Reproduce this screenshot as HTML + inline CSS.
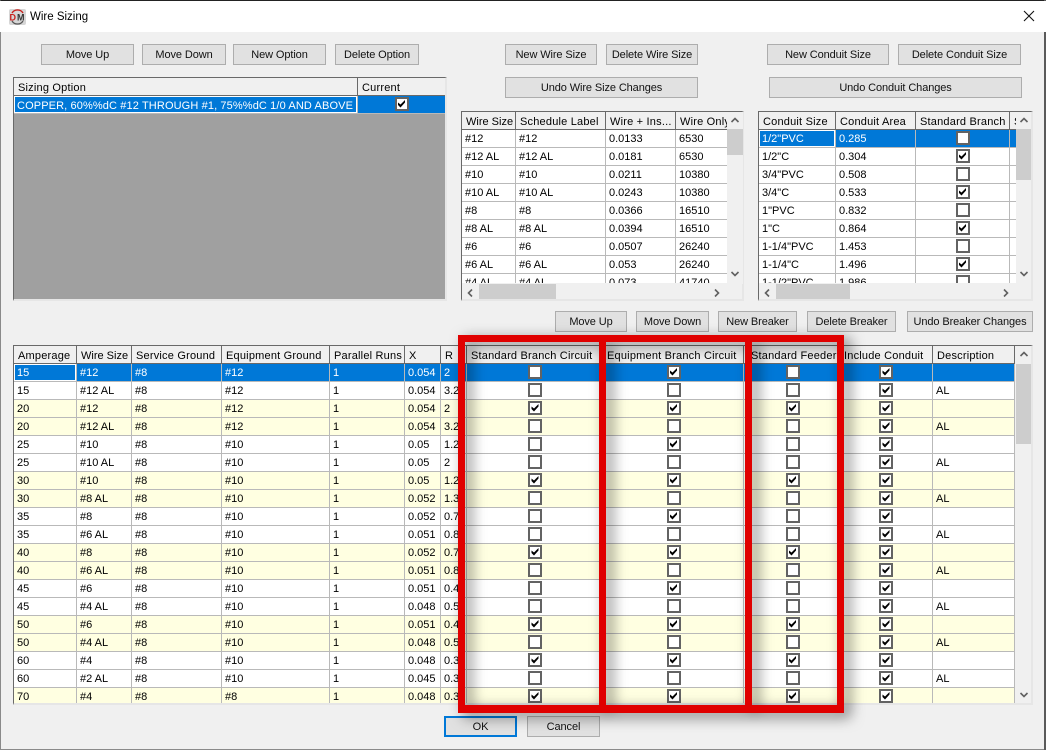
<!DOCTYPE html>
<html><head><meta charset="utf-8"><title>Wire Sizing</title>
<style>
html,body{margin:0;padding:0;width:1046px;height:750px;overflow:hidden;background:#5a5a5a}
*{box-sizing:border-box}
body{font:11px/17px "Liberation Sans",sans-serif;letter-spacing:-.1px;color:#000;position:relative}
#w{position:absolute;left:0;top:0;width:1044px;height:750px;background:#f0f0f0;border-left:1px solid #8a8a8a;border-bottom:1px solid #8a8a8a;border-top:1px solid #222}
#t{position:absolute;left:0;top:1px;width:1046px;height:31px;background:#fff}
.a{position:absolute}
.b{position:absolute;height:21px;background:#e1e1e1;border:1px solid #adadad;text-align:center;line-height:20px;white-space:nowrap;overflow:hidden;color:#111}
.g{position:absolute;background:#f0f0f0;border-top:1px solid #696969;border-left:1px solid #696969;border-right:2px solid #e6e6e6;border-bottom:2px solid #e6e6e6;overflow:hidden}
.c{position:absolute;overflow:hidden;left:0;top:0}
table{border-collapse:separate;border-spacing:0;table-layout:fixed}
th,td{height:18px;padding:2px 0 0 3px;line-height:15px;letter-spacing:0;border-right:1px solid #b9b9b9;border-bottom:1px solid #b9b9b9;overflow:hidden;white-space:nowrap;font-weight:400;text-align:left;vertical-align:top;background:#fff}
th{background:#f0f0f0;border-right:1px solid #696969;border-bottom:1px solid #696969;padding:4px 0 0 4px;line-height:13px;letter-spacing:.2px}
th.w{letter-spacing:0}
tr.y td{background:#ffffe1}
tr.s td{background:#0078d7;color:#fff}
td.f{box-shadow:inset 0 0 0 1px #fff}
td.m{padding:0;line-height:17px}
td.o{padding-top:4px;line-height:13px;letter-spacing:.12px}
i{display:block;width:14px;height:14px;margin:1px auto 0;border:2px solid #636363;background:#fff;position:relative}
i.k:after{content:"";position:absolute;left:0;top:0;width:10px;height:10px;background:#000;clip-path:polygon(1.5px 3.5px,4px 5.5px,8.5px 1px,8.5px 3.5px,4px 8.5px,1.5px 6px)}
td:nth-child(10) i{left:1px}
.vs,.hs{position:absolute;background:#f0f0f0}
.th{position:absolute;background:#cdcdcd}
svg{position:absolute;display:block}
#rb div{position:absolute;background:#e00000}
#rb{position:absolute;left:0;top:0;width:1046px;height:750px;filter:drop-shadow(6px 4px 7px rgba(0,0,0,.55))}
</style></head><body>
<div id="w"></div>
<div id="t"></div>
<svg style="left:9px;top:9px" width="17" height="16" viewBox="0 0 17 16"><rect width="17" height="16" rx="2" fill="#d6d6d6"/><path d="M3 4A6.5 6.5 0 0 1 14 4" fill="none" stroke="#c8201c" stroke-width="1.4"/><path d="M3 12A6.5 6.5 0 0 0 14 12" fill="none" stroke="#555" stroke-width="1.2"/><text x="0.5" y="11.5" font-family="Liberation Sans" font-weight="700" font-size="9" fill="#c8201c" textLength="7">D</text><text x="8" y="11.5" font-family="Liberation Sans" font-weight="700" font-size="9" fill="#333" textLength="8">M</text></svg>
<div class="a" style="left:30px;top:9px;font-size:11.5px;letter-spacing:0">Wire Sizing</div>
<svg style="left:1023px;top:10px" width="12" height="12" viewBox="0 0 12 12"><path d="M1 1L11 11M11 1L1 11" stroke="#111" stroke-width="1.1" fill="none"/></svg>

<div class="b" style="left:41px;top:44px;width:93px">Move Up</div>
<div class="b" style="left:142px;top:44px;width:84px">Move Down</div>
<div class="b" style="left:233px;top:44px;width:93px">New Option</div>
<div class="b" style="left:335px;top:44px;width:84px">Delete Option</div>
<div class="b" style="left:505px;top:44px;width:92px">New Wire Size</div>
<div class="b" style="left:606px;top:44px;width:92px">Delete Wire Size</div>
<div class="b" style="left:767px;top:44px;width:122px">New Conduit Size</div>
<div class="b" style="left:898px;top:44px;width:123px">Delete Conduit Size</div>
<div class="b" style="left:505px;top:77px;width:193px">Undo Wire Size Changes</div>
<div class="b" style="left:769px;top:77px;width:253px">Undo Conduit Changes</div>
<div class="b" style="left:555px;top:311px;width:72px">Move Up</div>
<div class="b" style="left:636px;top:311px;width:73px">Move Down</div>
<div class="b" style="left:718px;top:311px;width:79px">New Breaker</div>
<div class="b" style="left:807px;top:311px;width:89px">Delete Breaker</div>
<div class="b" style="left:907px;top:311px;width:126px">Undo Breaker Changes</div>

<!-- sizing option grid -->
<div class="g" style="left:13px;top:77px;width:434px;height:224px;background:#a0a0a0">
<table style="width:432px"><colgroup><col style="width:344px"><col style="width:88px"></colgroup>
<tr><th>Sizing Option</th><th>Current</th></tr>
<tr class="s"><td class="f o">COPPER, 60%%dC #12 THROUGH #1, 75%%dC 1/0 AND ABOVE</td><td class="m"><i class="k"></i></td></tr>
</table></div>

<!-- wire grid -->
<div class="g" style="left:461px;top:111px;width:283px;height:190px">
<div class="c" style="width:265px;height:171px">
<table style="width:300px"><colgroup><col style="width:54px"><col style="width:90px"><col style="width:70px"><col style="width:86px"></colgroup>
<tr><th class="w">Wire Size</th><th>Schedule Label</th><th>Wire + Ins...</th><th>Wire Only</th></tr>
<tr><td>#12</td><td>#12</td><td>0.0133</td><td>6530</td></tr>
<tr><td>#12 AL</td><td>#12 AL</td><td>0.0181</td><td>6530</td></tr>
<tr><td>#10</td><td>#10</td><td>0.0211</td><td>10380</td></tr>
<tr><td>#10 AL</td><td>#10 AL</td><td>0.0243</td><td>10380</td></tr>
<tr><td>#8</td><td>#8</td><td>0.0366</td><td>16510</td></tr>
<tr><td>#8 AL</td><td>#8 AL</td><td>0.0394</td><td>16510</td></tr>
<tr><td>#6</td><td>#6</td><td>0.0507</td><td>26240</td></tr>
<tr><td>#6 AL</td><td>#6 AL</td><td>0.053</td><td>26240</td></tr>
<tr><td>#4 AL</td><td>#4 AL</td><td>0.073</td><td>41740</td></tr>
</table></div></div>
<div class="vs" style="left:727px;top:112px;width:16px;height:172px"></div>
<div class="th" style="left:727px;top:129px;width:16px;height:26px"></div>
<div class="hs" style="left:462px;top:283px;width:265px;height:16px"></div>
<div class="th" style="left:479px;top:284px;width:77px;height:15px"></div>
<svg style="left:730px;top:117px" width="10" height="6" viewBox="0 0 10 6"><path d="M1.5 5L5 1.5L8.5 5" fill="none" stroke="#606060" stroke-width="1.6"/></svg>
<svg style="left:730px;top:271px" width="10" height="6" viewBox="0 0 10 6"><path d="M1.5 1L5 4.5L8.5 1" fill="none" stroke="#606060" stroke-width="1.6"/></svg>
<svg style="left:467px;top:288px" width="6" height="10" viewBox="0 0 6 10"><path d="M5 1.5L1.5 5L5 8.5" fill="none" stroke="#606060" stroke-width="1.6"/></svg>
<svg style="left:714px;top:288px" width="6" height="10" viewBox="0 0 6 10"><path d="M1 1.5L4.5 5L1 8.5" fill="none" stroke="#606060" stroke-width="1.6"/></svg>

<!-- conduit grid -->
<div class="g" style="left:758px;top:111px;width:275px;height:190px">
<div class="c" style="width:257px;height:171px">
<table style="width:311px"><colgroup><col style="width:77px"><col style="width:80px"><col style="width:94px"><col style="width:60px"></colgroup>
<tr><th>Conduit Size</th><th>Conduit Area</th><th>Standard Branch</th><th>Standard</th></tr>
<tr class="s"><td class="f">1/2"PVC</td><td>0.285</td><td class="m"><i></i></td><td></td></tr>
<tr><td>1/2"C</td><td>0.304</td><td class="m"><i class="k"></i></td><td></td></tr>
<tr><td>3/4"PVC</td><td>0.508</td><td class="m"><i></i></td><td></td></tr>
<tr><td>3/4"C</td><td>0.533</td><td class="m"><i class="k"></i></td><td></td></tr>
<tr><td>1"PVC</td><td>0.832</td><td class="m"><i></i></td><td></td></tr>
<tr><td>1"C</td><td>0.864</td><td class="m"><i class="k"></i></td><td></td></tr>
<tr><td>1-1/4"PVC</td><td>1.453</td><td class="m"><i></i></td><td></td></tr>
<tr><td>1-1/4"C</td><td>1.496</td><td class="m"><i class="k"></i></td><td></td></tr>
<tr><td>1-1/2"PVC</td><td>1.986</td><td class="m"><i></i></td><td></td></tr>
</table></div></div>
<div class="vs" style="left:1016px;top:112px;width:15px;height:172px"></div>
<div class="th" style="left:1016px;top:129px;width:15px;height:51px"></div>
<div class="hs" style="left:759px;top:283px;width:257px;height:16px"></div>
<div class="th" style="left:776px;top:284px;width:74px;height:15px"></div>
<svg style="left:1019px;top:117px" width="10" height="6" viewBox="0 0 10 6"><path d="M1.5 5L5 1.5L8.5 5" fill="none" stroke="#606060" stroke-width="1.6"/></svg>
<svg style="left:1019px;top:271px" width="10" height="6" viewBox="0 0 10 6"><path d="M1.5 1L5 4.5L8.5 1" fill="none" stroke="#606060" stroke-width="1.6"/></svg>
<svg style="left:764px;top:288px" width="6" height="10" viewBox="0 0 6 10"><path d="M5 1.5L1.5 5L5 8.5" fill="none" stroke="#606060" stroke-width="1.6"/></svg>
<svg style="left:1003px;top:288px" width="6" height="10" viewBox="0 0 6 10"><path d="M1 1.5L4.5 5L1 8.5" fill="none" stroke="#606060" stroke-width="1.6"/></svg>

<!-- breaker grid -->
<div class="g" style="left:13px;top:345px;width:1020px;height:360px">
<div class="c" style="width:1001px;height:357px">
<table style="width:1001px"><colgroup><col style="width:63px"><col style="width:55px"><col style="width:90px"><col style="width:108px"><col style="width:75px"><col style="width:36px"><col style="width:26px"><col style="width:137px"><col style="width:140px"><col style="width:96px"><col style="width:93px"><col style="width:82px"></colgroup>
<tr><th>Amperage</th><th class="w">Wire Size</th><th>Service Ground</th><th>Equipment Ground</th><th>Parallel Runs</th><th>X</th><th>R</th><th>Standard Branch Circuit</th><th style="padding-left:3px">Equipment Branch Circuit</th><th style="padding-left:7px">Standard Feeder</th><th>Include Conduit</th><th>Description</th></tr>
<tr class="s"><td class="f">15</td><td>#12</td><td>#8</td><td>#12</td><td>1</td><td>0.054</td><td>2</td><td class="m"><i></i></td><td class="m"><i class="k"></i></td><td class="m"><i></i></td><td class="m"><i class="k"></i></td><td></td></tr>
<tr><td>15</td><td>#12 AL</td><td>#8</td><td>#12</td><td>1</td><td>0.054</td><td>3.2</td><td class="m"><i></i></td><td class="m"><i></i></td><td class="m"><i></i></td><td class="m"><i class="k"></i></td><td>AL</td></tr>
<tr class="y"><td>20</td><td>#12</td><td>#8</td><td>#12</td><td>1</td><td>0.054</td><td>2</td><td class="m"><i class="k"></i></td><td class="m"><i class="k"></i></td><td class="m"><i class="k"></i></td><td class="m"><i class="k"></i></td><td></td></tr>
<tr class="y"><td>20</td><td>#12 AL</td><td>#8</td><td>#12</td><td>1</td><td>0.054</td><td>3.2</td><td class="m"><i></i></td><td class="m"><i></i></td><td class="m"><i></i></td><td class="m"><i class="k"></i></td><td>AL</td></tr>
<tr><td>25</td><td>#10</td><td>#8</td><td>#10</td><td>1</td><td>0.05</td><td>1.2</td><td class="m"><i></i></td><td class="m"><i class="k"></i></td><td class="m"><i></i></td><td class="m"><i class="k"></i></td><td></td></tr>
<tr><td>25</td><td>#10 AL</td><td>#8</td><td>#10</td><td>1</td><td>0.05</td><td>2</td><td class="m"><i></i></td><td class="m"><i></i></td><td class="m"><i></i></td><td class="m"><i class="k"></i></td><td>AL</td></tr>
<tr class="y"><td>30</td><td>#10</td><td>#8</td><td>#10</td><td>1</td><td>0.05</td><td>1.2</td><td class="m"><i class="k"></i></td><td class="m"><i class="k"></i></td><td class="m"><i class="k"></i></td><td class="m"><i class="k"></i></td><td></td></tr>
<tr class="y"><td>30</td><td>#8 AL</td><td>#8</td><td>#10</td><td>1</td><td>0.052</td><td>1.3</td><td class="m"><i></i></td><td class="m"><i></i></td><td class="m"><i></i></td><td class="m"><i class="k"></i></td><td>AL</td></tr>
<tr><td>35</td><td>#8</td><td>#8</td><td>#10</td><td>1</td><td>0.052</td><td>0.78</td><td class="m"><i></i></td><td class="m"><i class="k"></i></td><td class="m"><i></i></td><td class="m"><i class="k"></i></td><td></td></tr>
<tr><td>35</td><td>#6 AL</td><td>#8</td><td>#10</td><td>1</td><td>0.051</td><td>0.8</td><td class="m"><i></i></td><td class="m"><i></i></td><td class="m"><i></i></td><td class="m"><i class="k"></i></td><td>AL</td></tr>
<tr class="y"><td>40</td><td>#8</td><td>#8</td><td>#10</td><td>1</td><td>0.052</td><td>0.78</td><td class="m"><i class="k"></i></td><td class="m"><i class="k"></i></td><td class="m"><i class="k"></i></td><td class="m"><i class="k"></i></td><td></td></tr>
<tr class="y"><td>40</td><td>#6 AL</td><td>#8</td><td>#10</td><td>1</td><td>0.051</td><td>0.8</td><td class="m"><i></i></td><td class="m"><i></i></td><td class="m"><i></i></td><td class="m"><i class="k"></i></td><td>AL</td></tr>
<tr><td>45</td><td>#6</td><td>#8</td><td>#10</td><td>1</td><td>0.051</td><td>0.49</td><td class="m"><i></i></td><td class="m"><i class="k"></i></td><td class="m"><i></i></td><td class="m"><i class="k"></i></td><td></td></tr>
<tr><td>45</td><td>#4 AL</td><td>#8</td><td>#10</td><td>1</td><td>0.048</td><td>0.5</td><td class="m"><i></i></td><td class="m"><i></i></td><td class="m"><i></i></td><td class="m"><i class="k"></i></td><td>AL</td></tr>
<tr class="y"><td>50</td><td>#6</td><td>#8</td><td>#10</td><td>1</td><td>0.051</td><td>0.49</td><td class="m"><i class="k"></i></td><td class="m"><i class="k"></i></td><td class="m"><i class="k"></i></td><td class="m"><i class="k"></i></td><td></td></tr>
<tr class="y"><td>50</td><td>#4 AL</td><td>#8</td><td>#10</td><td>1</td><td>0.048</td><td>0.5</td><td class="m"><i></i></td><td class="m"><i></i></td><td class="m"><i></i></td><td class="m"><i class="k"></i></td><td>AL</td></tr>
<tr><td>60</td><td>#4</td><td>#8</td><td>#10</td><td>1</td><td>0.048</td><td>0.31</td><td class="m"><i class="k"></i></td><td class="m"><i class="k"></i></td><td class="m"><i class="k"></i></td><td class="m"><i class="k"></i></td><td></td></tr>
<tr><td>60</td><td>#2 AL</td><td>#8</td><td>#10</td><td>1</td><td>0.045</td><td>0.32</td><td class="m"><i></i></td><td class="m"><i></i></td><td class="m"><i></i></td><td class="m"><i class="k"></i></td><td>AL</td></tr>
<tr class="y"><td>70</td><td>#4</td><td>#8</td><td>#8</td><td>1</td><td>0.048</td><td>0.31</td><td class="m"><i class="k"></i></td><td class="m"><i class="k"></i></td><td class="m"><i class="k"></i></td><td class="m"><i class="k"></i></td><td></td></tr>
</table></div></div>
<div class="vs" style="left:1015px;top:346px;width:16px;height:357px"></div>
<div class="th" style="left:1016px;top:364px;width:15px;height:80px"></div>
<svg style="left:1019px;top:351px" width="10" height="6" viewBox="0 0 10 6"><path d="M1.5 5L5 1.5L8.5 5" fill="none" stroke="#606060" stroke-width="1.6"/></svg>
<svg style="left:1019px;top:692px" width="10" height="6" viewBox="0 0 10 6"><path d="M1.5 1L5 4.5L8.5 1" fill="none" stroke="#606060" stroke-width="1.6"/></svg>

<div class="b" style="left:444px;top:716px;width:73px;border:2px solid #0078d7;line-height:19px">OK</div>
<div class="b" style="left:527px;top:716px;width:73px">Cancel</div>

<div id="rb">
<div style="left:458px;top:335px;width:386px;height:7px;border-radius:2px 2px 0 0"></div>
<div style="left:458px;top:705px;width:386px;height:8px"></div>
<div style="left:458px;top:335px;width:7px;height:378px"></div>
<div style="left:599px;top:335px;width:7px;height:378px"></div>
<div style="left:745px;top:335px;width:7px;height:378px"></div>
<div style="left:837px;top:335px;width:7px;height:378px"></div>
</div>
</body></html>
